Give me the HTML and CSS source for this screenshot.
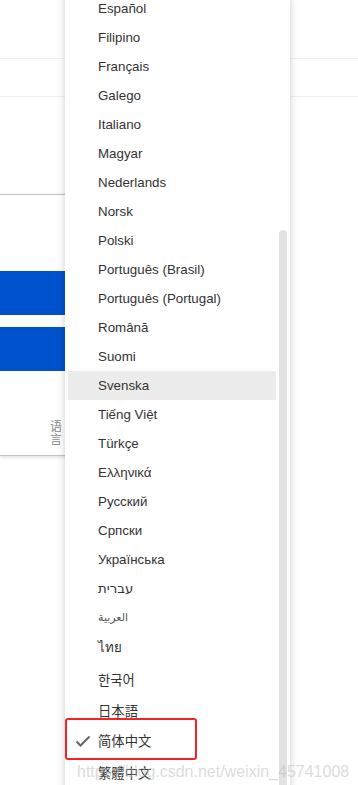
FILE: index.html
```html
<!DOCTYPE html>
<html lang="en">
<head>
    <meta charset="UTF-8">
    <meta name="viewport" content="width=device-width, initial-scale=1.0">
    <title>Language menu</title>
    <link rel="stylesheet" href="styles.css">
</head>
<body>
    <div class="page">
        <div class="topbar"></div>
        <div class="tabs"></div>
        <div class="card">
            <div class="blue-btn"></div>
            <div class="blue-btn second"></div>
            <div class="setting-row">
                <span class="setting-label" lang="zh-CN">语言</span>
            </div>
        </div>
    </div>

    <div class="menu">
        <ul class="menu-list">
            <li>Español</li>
            <li>Filipino</li>
            <li>Français</li>
            <li>Galego</li>
            <li>Italiano</li>
            <li>Magyar</li>
            <li>Nederlands</li>
            <li>Norsk</li>
            <li>Polski</li>
            <li>Português (Brasil)</li>
            <li>Português (Portugal)</li>
            <li>Română</li>
            <li>Suomi</li>
            <li class="hover">Svenska</li>
            <li>Tiếng Việt</li>
            <li>Türkçe</li>
            <li>Ελληνικά</li>
            <li>Русский</li>
            <li>Српски</li>
            <li>Українська</li>
            <li lang="he">עברית</li>
            <li lang="ar" class="small">العربية</li>
            <li lang="th" class="tall">ไทย</li>
            <li lang="ko" class="tall">한국어</li>
            <li lang="ja">日本語</li>
            <li lang="zh-CN" class="tall selected">
                <svg class="check" width="16" height="16" viewBox="0 0 16 16">
                    <path d="M1.5 8.5 L5.5 12.5 L14.5 3.5" fill="none" stroke="#666" stroke-width="2"/>
                </svg>
                简体中文
            </li>
            <li lang="zh-TW" class="tall">繁體中文</li>
        </ul>
        <div class="scroll-track">
            <div class="scroll-thumb"></div>
        </div>
    </div>

    <div class="highlight-box"></div>
    <div class="watermark">https://blog.csdn.net/weixin_45741008</div>
</body>
</html>
```

FILE: styles.css
```css
body {
    margin: 0;
    background: #fff;
    font-family: "Liberation Sans", Arial, "Noto Sans CJK SC", sans-serif;
    height: 785px;
    overflow: hidden;
    position: relative;
}

.page {
    width: 100%;
}

.topbar {
    height: 58px;
    border-bottom: 1px solid #f0f0f0;
}

.tabs {
    height: 37px;
    border-bottom: 1px solid #f0f0f0;
}

.card {
    margin-top: 97px;
    width: 220px;
    height: 260px;
    border-top: 1px solid #c4c4c4;
    border-bottom: 1px solid #c4c4c4;
    box-shadow: 0 1px 4px rgba(0, 0, 0, 0.15);
    background: #fff;
}

.blue-btn {
    height: 44px;
    margin-top: 76px;
    background-color: #0052cc;
}

.blue-btn.second {
    margin-top: 12px;
}

.setting-row {
    padding-left: 50px;
    margin-top: 48px;
}

.setting-label {
    display: block;
    width: 12px;
    font-family: "Noto Sans CJK SC", sans-serif;
    font-size: 12px;
    line-height: 13px;
    color: #8a8a8a;
    word-break: break-all;
}

/* dropdown menu, lies over the page */
.menu {
    position: absolute;
    left: 65px;
    top: -6px;
    width: 225px;
    height: 800px;
    background: #fff;
    box-shadow: 0 2px 8px rgba(0, 0, 0, 0.2);
    display: flex;
}

.menu-list {
    list-style: none;
    margin: 0;
    padding: 0 0 0 3px;
    width: 208px;
}

.menu-list li {
    position: relative;
    height: 29px;
    line-height: 29px;
    padding-left: 30px;
    font-size: 13.33px;
    color: #333;
    white-space: nowrap;
}

.menu-list li.tall {
    height: 32px;
    line-height: 32px;
}

.menu-list li.small {
    font-size: 11px;
    color: #555;
}

.menu-list li.hover {
    background-color: #ececec;
}

.menu-list li:lang(he),
.menu-list li:lang(ar),
.menu-list li:lang(th) {
    font-family: "DejaVu Sans", "Noto Sans", sans-serif;
}

.menu-list li:lang(zh-CN) {
    font-family: "Noto Sans CJK SC", sans-serif;
}

.menu-list li:lang(zh-TW) {
    font-family: "Noto Sans CJK TC", sans-serif;
}

.menu-list li:lang(ja) {
    font-family: "Noto Sans CJK JP", sans-serif;
}

.menu-list li:lang(ko) {
    font-family: "Noto Sans CJK KR", sans-serif;
}

.check {
    position: absolute;
    left: 7px;
    top: 8px;
}

.scroll-track {
    width: 14px;
    padding-top: 236px;
    box-sizing: border-box;
}

.scroll-thumb {
    width: 8px;
    height: 600px;
    margin-left: 3px;
    background: #e2e2e2;
    border-radius: 4px 4px 0 0;
}

/* screenshot annotations */
.highlight-box {
    position: absolute;
    left: 65px;
    top: 718px;
    width: 128px;
    height: 38px;
    border: 2px solid #f42424;
    border-radius: 3px;
}

.watermark {
    position: absolute;
    left: 77px;
    top: 763px;
    font-family: "Liberation Sans", Arial, sans-serif;
    font-size: 16px;
    color: rgba(190, 190, 190, 0.55);
    white-space: nowrap;
}
```
